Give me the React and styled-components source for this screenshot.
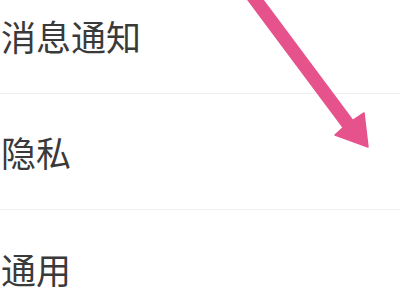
import React from "react";
import styled, { createGlobalStyle } from "styled-components";

const Global = createGlobalStyle`
  html, body { margin: 0; padding: 0; background: #ffffff; }
  body { width: 400px; height: 300px; overflow: hidden; }
`;

const Screen = styled.div`
  position: relative;
  width: 400px;
  height: 300px;
  overflow: hidden;
  background: #ffffff;
  font-family: "Noto Sans CJK SC", "Noto Sans", sans-serif;
`;

const List = styled.div`
  display: flex;
  flex-direction: column;
  margin-top: -22px;
`;

const Row = styled.div`
  display: flex;
  align-items: center;
  height: 116px;
  padding: 0 0 0 1px;
  box-sizing: border-box;
  border-bottom: ${(p) => (p.$last ? "none" : "1px solid #efefef")};
`;

const Label = styled.span`
  font-size: 35px;
  line-height: 1;
  color: #3a3a3a;
  letter-spacing: 0;
`;

const ArrowLayer = styled.svg`
  position: absolute;
  left: 0;
  top: 0;
  width: 400px;
  height: 300px;
  pointer-events: none;
`;

const items = ["消息通知", "隐私", "通用"];

export default function App() {
  return (
    <>
      <Global />
      <Screen>
        <List>
          {items.map((t, i) => (
            <Row key={t} $last={i === items.length - 1}>
              <Label>{t}</Label>
            </Row>
          ))}
        </List>
        <ArrowLayer viewBox="0 0 400 300">
          <polygon
            points="243.3,-6.4 252.9,-13.6 352.8,120.4 364,113 368,147 335,135 343.2,127.6"
            fill="#e6538c"
            stroke="#e6538c"
            strokeWidth="1.5"
            strokeLinejoin="round"
          />
        </ArrowLayer>
      </Screen>
    </>
  );
}
